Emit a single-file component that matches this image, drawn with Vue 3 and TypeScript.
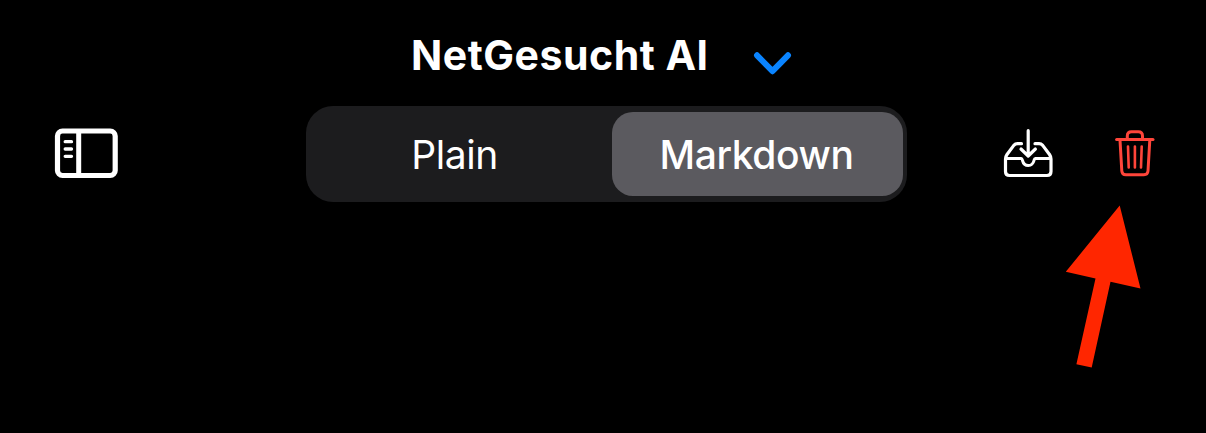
<script setup lang="ts">
import { ref } from 'vue'

type Mode = 'Plain' | 'Markdown'
const modes: Mode[] = ['Plain', 'Markdown']
const selected = ref<Mode>('Markdown')
</script>

<template>
  <main class="screen">
    <header class="title-row">
      <h1 class="title">NetGesucht AI</h1>
      <svg class="chevron" viewBox="750 46 46 32" width="46" height="32" aria-hidden="true">
        <path d="M757 55.3 L772.5 71.2 L788 55.3" />
      </svg>
    </header>

    <div class="toolbar">
      <button class="icon-button" aria-label="Toggle sidebar">
        <svg class="line-icon" viewBox="50 126 72 56" width="72" height="56">
          <rect x="57.5" y="131" width="57.7" height="44.5" rx="5" stroke-width="5.2" />
          <path d="M78.7 131 V175.5" stroke-width="5" stroke-linecap="butt" />
          <path d="M65.2 141.7 H71.5 M65.2 149 H71.5 M65.2 156.3 H71.5" stroke-width="3.3" />
        </svg>
      </button>

      <div class="segmented">
        <button
          v-for="mode in modes"
          :key="mode"
          class="segment"
          :class="{ active: mode === selected }"
          @click="selected = mode"
        ><span>{{ mode }}</span></button>
      </div>

      <button class="icon-button tray" aria-label="Save">
        <svg class="line-icon" viewBox="1000 126 56 56" width="56" height="56">
          <path d="M1021.5 143.7 H1017.5 Q1015.3 143.7 1013.8 145.4 L1007 154.5 Q1005.5 156.7 1005.5 159 V171.5 Q1005.5 175.5 1009.5 175.5 H1047 Q1051 175.5 1051 171.5 V159 Q1051 156.7 1049.5 154.5 L1042.7 145.4 Q1041.2 143.7 1039 143.7 H1035" stroke-width="3.2" />
          <path d="M1006 158.6 H1021.2 C1022.2 158.6 1022.2 159.4 1022.5 160.5 C1024.2 167.2 1032.3 167.2 1034 160.5 C1034.3 159.4 1034.3 158.6 1035.3 158.6 H1050.5" stroke-width="3" />
          <path d="M1028.2 130.7 V155.5 M1021 149 L1028.2 156 L1035.4 149" stroke-width="3.2" />
        </svg>
      </button>

      <button class="icon-button trash" aria-label="Delete">
        <svg class="line-icon" viewBox="1112 126 46 56" width="46" height="56">
          <path d="M1116.6 139.5 H1153" stroke-width="3" />
          <path d="M1127.3 139 V136 Q1127.3 131.8 1131.5 131.8 H1138.3 Q1142.5 131.8 1142.5 136 V139" stroke-width="3" />
          <path d="M1120 140 L1121.8 171 Q1122.1 174.8 1125.9 174.8 H1143.9 Q1147.7 174.8 1148 171 L1149.8 140" stroke-width="3" />
          <path d="M1128 146.5 L1128.7 167.5 M1134.9 146.5 V167.5 M1141.7 146.5 L1141 167.5" stroke-width="2.6" />
        </svg>
      </button>
    </div>

    <svg class="pointer" viewBox="1060 200 90 175" width="90" height="175" aria-hidden="true">
      <path d="M1119.7 205.5 L1140.5 288.5 L1110.5 281.7 L1091.7 367.5 L1076.4 364.2 L1095.5 278.5 L1065.8 271.8 Z" />
    </svg>
  </main>
</template>

<style>
body {
  background: #000;
}
</style>

<style scoped>
.screen {
  position: relative;
  width: 1206px;
  height: 433px;
  overflow: hidden;
  background: #000;
  color: #fff;
  font-family: Inter, "Liberation Sans", sans-serif;
}
.title-row {
  display: flex;
  height: 106px;
  padding-left: 411px;
}
.title {
  width: 339px;
  margin: 30px 0 0;
  font-size: 41px;
  line-height: 50px;
  font-weight: 650;
  letter-spacing: 0.52px;
  white-space: nowrap;
}
.chevron {
  margin-top: 46px;
  fill: none;
  stroke: #0a84ff;
  stroke-width: 6;
  stroke-linecap: round;
  stroke-linejoin: round;
}
.toolbar {
  display: flex;
  align-items: center;
  height: 96px;
  padding-left: 50px;
}
button {
  padding: 0;
  border: 0;
  background: none;
  color: inherit;
  font: inherit;
}
.icon-button {
  display: flex;
  color: #fff;
}
.line-icon {
  fill: none;
  stroke: currentColor;
  stroke-linecap: round;
  stroke-linejoin: round;
}
.segmented {
  display: grid;
  grid-template-columns: 287px 291px;
  column-gap: 13px;
  box-sizing: border-box;
  width: 601px;
  height: 96px;
  margin-left: 184px;
  padding: 6px 4px 6px 6px;
  border-radius: 27px;
  background: #1c1c1e;
}
.segment {
  padding: 1px 2px 0 0;
  border-radius: 21px;
  font-size: 39px;
  line-height: 83px;
  letter-spacing: -0.4px;
}
.segment.active {
  background: #5b5a5f;
  font-weight: 500;
}
.tray {
  margin-left: 93px;
}
.trash {
  margin-left: 56px;
  color: #ff453a;
}
.pointer {
  position: absolute;
  left: 1060px;
  top: 200px;
  fill: #ff2600;
}
</style>
